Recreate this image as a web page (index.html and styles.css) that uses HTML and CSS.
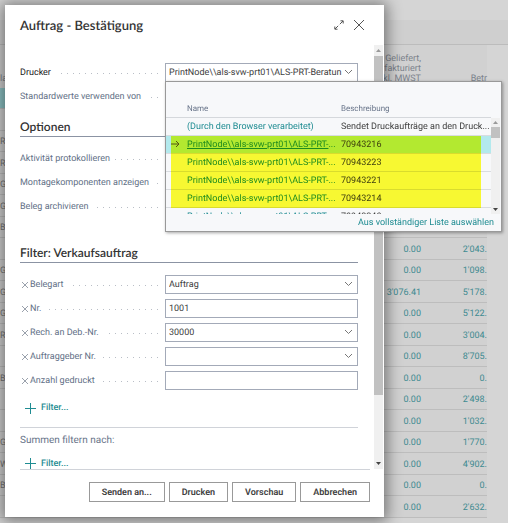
FILE: index.html
```html
<!DOCTYPE html>
<html lang="de">
<head>
<meta charset="utf-8">
<meta name="viewport" content="width=device-width, initial-scale=1">
<title>Auftrag - Bestätigung</title>
<link rel="stylesheet" href="styles.css">
</head>
<body>
<div class="page">
  <div class="page-bar"></div>
  <div class="page-tools"></div>
  <table class="orders">
    <thead>
      <tr><th class="col-code">la</th><th class="col-amount">– Geliefert,<br>t fakturiert<br>inkl. MWST</th><th class="col-total">Betr</th></tr>
    </thead>
    <tbody>
      <tr class="is-current"><td></td><td></td><td></td></tr>
      <tr><td></td><td></td><td></td></tr>
      <tr><td>R(</td><td></td><td></td></tr>
      <tr><td>R(</td><td></td><td></td></tr>
      <tr><td>G</td><td></td><td></td></tr>
      <tr><td>G</td><td></td><td></td></tr>
      <tr><td>BI</td><td>384.00</td><td>776.</td></tr>
      <tr><td></td><td>0.00</td><td>2'043.</td></tr>
      <tr><td>G</td><td>0.00</td><td>1'098.</td></tr>
      <tr><td>G</td><td>3'076.41</td><td>5'178.</td></tr>
      <tr><td>G</td><td>0.00</td><td>5'122.</td></tr>
      <tr><td>R(</td><td>0.00</td><td>3'004.</td></tr>
      <tr><td></td><td>0.00</td><td>8'705.</td></tr>
      <tr><td>BI</td><td>0.00</td><td>0.</td></tr>
      <tr><td></td><td>0.00</td><td>2'498.</td></tr>
      <tr><td></td><td>0.00</td><td>1'032.</td></tr>
      <tr><td>G</td><td>0.00</td><td>1'770.</td></tr>
      <tr><td>W</td><td>0.00</td><td>4'902.</td></tr>
      <tr><td>BI</td><td>0.00</td><td>0.</td></tr>
      <tr><td></td><td>0.00</td><td>2'632.</td></tr>
    </tbody>
  </table>
</div>

<div class="overlay">
  <form class="dialog" role="dialog" aria-labelledby="dialog-title">
    <header class="dialog-header">
      <h1 id="dialog-title">Auftrag - Bestätigung</h1>
      <button type="button" class="icon-button" aria-label="Vergrössern">
        <svg width="12" height="12" viewBox="0 0 12 12"><path d="M2 10 5.2 6.8M6.8 5.2 10 2M7.5 1.8h2.7v2.7M1.8 7.5v2.7h2.7"/></svg>
      </button>
      <button type="button" class="icon-button" aria-label="Schliessen">
        <svg width="12" height="12" viewBox="0 0 12 12"><path d="m1 1 10 10M11 1 1 11"/></svg>
      </button>
    </header>

    <div class="dialog-body">
      <div class="content">
        <div class="fields">
          <div class="field">
            <label class="label strong" for="printer">Drucker</label>
            <div class="combo">
              <input id="printer" value="PrintNode\\als-svw-prt01\ALS-PRT-Beratun">
              <svg class="chevron" width="9" height="6" viewBox="0 0 9 6"><path d="m1 1 3.500 3.500L8 1"/></svg>
              <div class="lookup">
                <div class="lookup-list">
                  <table class="printers">
                    <thead><tr><th class="col-mark"></th><th class="col-name">Name</th><th>Beschreibung</th></tr></thead>
                    <tbody>
                      <tr><td></td><td><a href="#">(Durch den Browser verarbeitet)</a></td><td>Sendet Druckaufträge an den Druck...</td></tr>
                      <tr class="is-selected"><td><svg width="9" height="8" viewBox="0 0 9 8"><path d="M0 4h8M5 1l3 3-3 3"/></svg></td><td><a href="#">PrintNode\\als-svw-prt01\ALS-PRT-</a>...</td><td>70943216</td></tr>
                      <tr><td></td><td><a href="#">PrintNode\\als-svw-prt01\ALS-PRT-</a>...</td><td>70943223</td></tr>
                      <tr><td></td><td><a href="#">PrintNode\\als-svw-prt01\ALS-PRT-</a>...</td><td>70943221</td></tr>
                      <tr><td></td><td><a href="#">PrintNode\\als-svw-prt01\ALS-PRT-</a>...</td><td>70943214</td></tr>
                      <tr><td></td><td><a href="#">PrintNode\\als-svw-prt01\ALS-PRT-</a>...</td><td>70943240</td></tr>
                    </tbody>
                  </table>
                  <div class="marker"></div>
                </div>
                <div class="scrollbar lookup-scroll">
                  <svg width="9" height="9" viewBox="0 0 9 9"><path d="M2 6h5L4.500 3z"/></svg>
                  <div class="thumb"></div>
                  <svg class="down" width="9" height="9" viewBox="0 0 9 9"><path d="M2 3h5L4.500 6z"/></svg>
                </div>
                <a class="lookup-link" href="#">Aus vollständiger Liste auswählen</a>
              </div>
            </div>
          </div>
          <div class="field"><span class="label">Standardwerte verwenden von</span></div>
        </div>

        <section>
          <h2>Optionen</h2>
          <div class="fields">
            <div class="field"><span class="label">Aktivität protokollieren</span></div>
            <div class="field"><span class="label">Montagekomponenten anzeigen</span></div>
            <div class="field"><span class="label">Beleg archivieren</span></div>
          </div>
        </section>

        <section class="filters">
          <h2>Filter: Verkaufsauftrag</h2>
          <div class="fields">
            <div class="field">
              <label class="label" for="doc-type"><svg class="remove" width="6" height="6" viewBox="0 0 6 6"><path d="m0 0 6 6M6 0 0 6"/></svg>Belegart</label>
              <div class="combo"><select id="doc-type"><option>Auftrag</option></select><svg class="chevron" width="9" height="6" viewBox="0 0 9 6"><path d="m1 1 3.500 3.500L8 1"/></svg></div>
            </div>
            <div class="field">
              <label class="label" for="number"><svg class="remove" width="6" height="6" viewBox="0 0 6 6"><path d="m0 0 6 6M6 0 0 6"/></svg>Nr.</label>
              <div class="combo"><input id="number" value="1001"></div>
            </div>
            <div class="field">
              <label class="label" for="bill-to"><svg class="remove" width="6" height="6" viewBox="0 0 6 6"><path d="m0 0 6 6M6 0 0 6"/></svg>Rech. an Deb.-Nr.</label>
              <div class="combo"><input id="bill-to" value="30000"><svg class="chevron" width="9" height="6" viewBox="0 0 9 6"><path d="m1 1 3.500 3.500L8 1"/></svg></div>
            </div>
            <div class="field">
              <label class="label" for="sell-to"><svg class="remove" width="6" height="6" viewBox="0 0 6 6"><path d="m0 0 6 6M6 0 0 6"/></svg>Auftraggeber Nr.</label>
              <div class="combo"><input id="sell-to"><svg class="chevron" width="9" height="6" viewBox="0 0 9 6"><path d="m1 1 3.500 3.500L8 1"/></svg></div>
            </div>
            <div class="field">
              <label class="label" for="printed"><svg class="remove" width="6" height="6" viewBox="0 0 6 6"><path d="m0 0 6 6M6 0 0 6"/></svg>Anzahl gedruckt</label>
              <div class="combo"><input id="printed"></div>
            </div>
          </div>
          <button type="button" class="add-filter"><svg width="11" height="11" viewBox="0 0 11 11"><path d="M5.500 0v11M0 5.500h11"/></svg>Filter...</button>
        </section>

        <section class="totals">
          <h3>Summen filtern nach:</h3>
          <button type="button" class="add-filter"><svg width="11" height="11" viewBox="0 0 11 11"><path d="M5.500 0v11M0 5.500h11"/></svg>Filter...</button>
        </section>
      </div>
      <div class="scrollbar">
        <svg width="9" height="11" viewBox="0 0 9 11"><path d="M2 7h5L4.500 4z"/></svg>
        <div class="thumb"></div>
        <svg class="down" width="9" height="11" viewBox="0 0 9 11"><path d="M2 4h5L4.500 7z"/></svg>
      </div>
    </div>

    <footer class="dialog-footer">
      <button type="button">Senden an...</button>
      <button type="button">Drucken</button>
      <button type="button">Vorschau</button>
      <button type="button">Abbrechen</button>
    </footer>
  </form>
</div>
</body>
</html>
```
FILE: styles.css
```css
* { box-sizing: border-box; }

body {
  margin: 0;
  background: #d5d5d5;
  color: #404040;
  font-family: Roboto, "Noto Sans", sans-serif;
  font-size: 9px;
  line-height: 14px;
  text-rendering: geometricPrecision;
}

h1, h2, h3 { margin: 0; font-weight: 600; color: #333; }
button, input, select { font: inherit; color: inherit; text-rendering: inherit; }
a { color: #1f8c92; text-decoration: none; }
svg { display: block; flex: none; fill: none; stroke: #555; }

/* Order list behind the dialog */
.page { min-height: 100vh; padding-right: 21px; overflow: hidden; }
.page-bar { height: 20px; }
.page-tools {
  height: 25px;
  margin-right: -21px;
  background: #cfcfcf;
  border-bottom: 1px solid #bcbcbc;
}
.orders {
  width: 100%;
  table-layout: fixed;
  border-collapse: separate;
  border-spacing: 0;
  background: #d1d1d1;
  color: #3d8a90;
}
.orders th {
  height: 43px;
  padding: 0 0 4px;
  font-weight: 400;
  line-height: 10px;
  color: #7c838c;
  text-align: right;
  vertical-align: bottom;
  white-space: nowrap;
}
.orders .col-code { width: 5px; text-align: left; }
.orders .col-total { width: 66px; }
.orders td {
  height: 21px;
  padding: 2px 0 0;
  border-bottom: 1px solid #bdbdbd;
  line-height: 14px;
  text-align: right;
}
.orders tr:nth-child(even) td { height: 22px; }
.orders td:first-child { color: #777; text-align: left; }
.orders .is-current td:first-child { background: #8fc4c6; }

/* Dialog */
.overlay {
  position: absolute;
  inset: 0;
  display: flex;
  align-items: flex-start;
  padding: 5px 124px 6px 5px;
}
.dialog {
  flex: 1;
  min-width: 0;
  background: #fff;
  box-shadow: 0 1px 14px 3px rgba(0, 0, 0, .45);
}
.dialog-header {
  display: flex;
  align-items: center;
  gap: 8px;
  height: 40px;
  padding: 0 19px 0 15px;
}
h1, h2 { font-family: Lato, "Noto Sans", sans-serif; }
h1 { flex: 1; font-size: 13px; line-height: 18px; }
.icon-button { padding: 0; border: 0; background: none; }
.dialog-body { display: flex; border-right: 1px solid #fff; }
.content { flex: 1; min-width: 0; padding: 15px 16px 0 15px; }
h2 {
  height: 20px;
  margin: 9px 0;
  border-bottom: 1px solid #8b93a3;
  font-size: 12px;
  line-height: 20px;
}
.filters h2 { margin-top: 25px; }

.field {
  display: grid;
  grid-template-columns: 138px minmax(0, 1fr);
  column-gap: 7px;
  align-items: center;
  height: 24px;
}
.label {
  display: flex;
  align-items: center;
  padding-top: 2px;
  color: #627086;
  white-space: nowrap;
}
.label::after {
  content: "";
  flex: 1;
  height: 1px;
  margin-left: 5px;
  background: repeating-linear-gradient(to left, #b9bec6 0 1px, transparent 1px 6px);
}
.strong { color: #222; }
.remove { margin: 0 2px; stroke: #9aa1ac; }
.combo {
  position: relative;
  display: flex;
  align-items: center;
  height: 19px;
  border: 1px solid #a3aab8;
}
.combo input, .combo select {
  flex: 1;
  min-width: 0;
  height: 17px;
  padding: 2px 0 0 3px;
  border: 0;
  outline: 0;
  background: none;
  appearance: none;
}
.chevron { margin: 0 4px 0 2px; stroke: #777; }

/* Printer lookup */
.lookup {
  position: absolute;
  z-index: 2;
  top: 17px;
  left: -1px;
  display: grid;
  grid-template-columns: minmax(0, 1fr) 9px;
  width: 337px;
  padding: 19px 1px 0 0;
  border: 1px solid #999;
  background: #f7f8fa;
  box-shadow: 1px 1px 3px rgba(0, 0, 0, .35);
}
.lookup-list { position: relative; height: 113px; overflow: hidden; }
.printers { width: 100%; table-layout: fixed; border-collapse: separate; border-spacing: 0; }
.printers th {
  height: 17px;
  padding: 0;
  border-bottom: 1px solid #d5d8dc;
  font-size: 8px;
  font-weight: 400;
  text-align: left;
  color: #69758a;
}
.printers .col-mark { width: 21px; }
.printers .col-name { width: 154px; }
.printers td {
  height: 18px;
  padding: 2px 0 0;
  border-bottom: 1px solid #d9dce0;
  white-space: nowrap;
}
.printers td:first-child { padding: 0 5px; }
.printers td:nth-child(2) { color: #1f8c92; }
.is-selected td { background: #b3e9ed; }
.is-selected a { text-decoration: underline; }
.marker {
  position: absolute;
  inset: 35px 10px 6px 5px;
  background: #ffff33;
  mix-blend-mode: multiply;
}
.lookup-link { grid-column: 1 / -1; padding: 2px 6px 1px 0; text-align: right; }

/* Scrollbars */
.scrollbar { display: flex; flex-direction: column; width: 9px; background: #f0f0f0; }
.scrollbar svg { fill: #999; stroke: none; }
.scrollbar .down { margin-top: auto; fill: #444; }
.thumb { flex: 0 0 80%; background: #c1c1c1; }
.lookup-scroll { margin-top: 17px; }
.lookup-scroll .thumb { flex-basis: 11px; }

.add-filter {
  display: flex;
  align-items: center;
  gap: 5px;
  height: 16px;
  padding: 0 5px;
  border: 0;
  background: none;
  color: #1f8c92;
  font-weight: 500;
}
.add-filter svg { stroke: #1f8c92; }
.filters .add-filter { margin-top: 8px; }
.totals { margin-top: 11px; border-top: 1px solid #d0d3d9; }
.totals h3 { margin: 6px 0 10px; font-size: 10px; line-height: 14px; font-weight: 400; color: #69758a; }
.totals .add-filter { height: 11px; }

.dialog-footer {
  display: flex;
  justify-content: flex-end;
  gap: 4px;
  margin: 0 14px 0 15px;
  padding: 12px 0 15px;
  border-top: 1px solid #d0d3d9;
}
.dialog-footer button {
  height: 20px;
  padding: 1px 12px 0;
  border: 1px solid #999;
  background: #fff;
  font-weight: 600;
  line-height: 14px;
}
```
